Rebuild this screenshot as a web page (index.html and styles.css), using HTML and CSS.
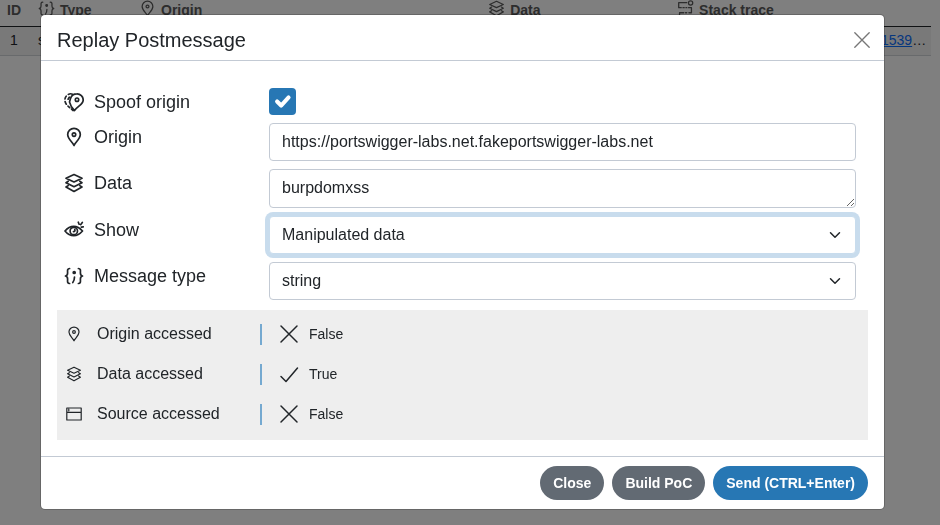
FILE: index.html
```html
<!DOCTYPE html>
<html lang="en">
<head>
<meta charset="utf-8">
<meta name="viewport" content="width=device-width, initial-scale=1">
<title>Replay Postmessage</title>
<link rel="stylesheet" href="styles.css">
</head>
<body>
<svg class="defs" aria-hidden="true">
  <symbol id="pin" viewBox="0 0 20 20"><path d="M10 18.500C8.900 15.400 3.700 12.200 3.700 7.600a6.300 6.300 0 0 1 12.600 0c0 4.600-5.200 7.800-6.300 10.900z"/><circle cx="10" cy="7.600" r="1.700"/></symbol>
  <symbol id="layers" viewBox="0 0 20 20"><path d="M10 1.500 18 5.300 10 9 2 5.300zM4.200 8.300 2 9.700l8 4 8-4-2.200-1.400M4.200 12.600 2 14l8 4.500 8-4.500-2.200-1.400"/></symbol>
  <symbol id="braces" viewBox="0 0 20 20"><path d="M5.600 2.500C3 2.500 3.600 5 3.600 7S3 9.700 1.500 10c1.500.3 2.100 1 2.100 3s-.6 4.500 2 4.500M14.400 2.500c2.600 0 2 2.500 2 4.500s.6 2.700 2.100 3c-1.500.3-2.100 1-2.100 3s.6 4.500-2 4.500M10.500 11c0 2.400-.5 4-1.700 5.500"/><circle cx="10.200" cy="6.500" r="1" fill="currentColor"/></symbol>
  <symbol id="spoof" viewBox="0 0 20 20"><path d="M10.500 18.500 7.300 14.500 5.500 10l1-3.500C7.400 3.500 10 1.800 12.900 1.800A6.100 6.100 0 0 1 19.200 8c0 4.500-5.700 6-8.700 10.500z"/><circle cx="13" cy="7.700" r="1.700"/><path d="M8.500 2.200C7 1.500 5.500 1.700 4.300 2.400M2.200 4.200C1.500 5 1.100 6 1 7M1.100 9.500c.2 1 .6 1.900 1.200 2.700M4 14.100l1.700 1.500M7.500 17l1.700 1.500M5.300 5.200 4.100 7.200"/></symbol>
  <symbol id="eye" viewBox="0 0 20 20"><path d="M1 11c2.500-3.100 5.200-4.700 8.800-4.700s6 1.600 8.700 4.700c-2.700 3.100-5.100 4.700-8.700 4.700S3.500 14.100 1 11z"/><circle cx="9.800" cy="11" r="3.700"/><path d="M10.800 9.500c.4 1.200 0 2-1.300 2.200M14.300 2.200l.8 2M18.300 2.500l-1.700 2.200M19.300 6.800l-2 .3"/></symbol>
  <symbol id="stack" viewBox="0 0 20 20"><path d="M11.500 3H2v6h3M7 9h1.500M10.500 9h1M13.500 9H17v6h-3M3 18v-3h5M10 15h1.500"/><circle cx="16" cy="3.500" r="2.500"/></symbol>
  <symbol id="window" viewBox="0 0 20 20"><path d="M1 2.500h18v15H1zM1 8h18M3.500 4v2"/></symbol>
  <symbol id="cross" viewBox="0 0 20 20"><path d="m2 2 16 16M18 2 2 18"/></symbol>
  <symbol id="tick" viewBox="0 0 20 20"><path d="m2 12.500 5 5L18.500 4"/></symbol>
</svg>

<main class="page">
  <table class="messages">
    <colgroup><col class="col-id"><col class="col-type"><col class="col-origin"><col class="col-data"><col><col class="col-link"></colgroup>
    <thead>
      <tr>
        <th>ID</th>
        <th><span class="heading"><svg class="icon"><use href="#braces"/></svg>Type</span></th>
        <th><span class="heading"><svg class="icon"><use href="#pin"/></svg>Origin</span></th>
        <th><span class="heading"><svg class="icon"><use href="#layers"/></svg>Data</span></th>
        <th><span class="heading"><svg class="icon"><use href="#stack"/></svg>Stack trace</span></th>
        <th></th>
      </tr>
    </thead>
    <tbody>
      <tr><td class="number">1</td><td>s</td><td></td><td></td><td></td><td><a href="#">1539</a>…</td></tr>
    </tbody>
  </table>
</main>

<div class="overlay">
  <form class="modal" role="dialog" aria-labelledby="title">
    <header class="modal-header">
      <h1 id="title">Replay Postmessage</h1>
      <button type="button" class="dismiss" aria-label="Close dialog"><svg class="icon"><use href="#cross"/></svg></button>
    </header>
    <div class="modal-body">
      <div class="fields">
        <label for="spoof-origin"><svg class="icon"><use href="#spoof"/></svg>Spoof origin</label>
        <span class="check"><input type="checkbox" id="spoof-origin" checked><svg viewBox="0 0 20 20"><path d="m6 10 3 3 5.500-6"/></svg></span>
        <label for="origin"><svg class="icon"><use href="#pin"/></svg>Origin</label>
        <input class="control" type="text" id="origin" value="https://portswigger-labs.net.fakeportswigger-labs.net">
        <label for="data"><svg class="icon"><use href="#layers"/></svg>Data</label>
        <textarea class="control" id="data" rows="1">burpdomxss</textarea>
        <label for="show"><svg class="icon"><use href="#eye"/></svg>Show</label>
        <span class="picker"><select class="control active" id="show"><option>Manipulated data</option></select><svg viewBox="0 0 16 16"><path d="m2 5 6 6 6-6"/></svg></span>
        <label for="type"><svg class="icon"><use href="#braces"/></svg>Message type</label>
        <span class="picker"><select class="control" id="type"><option>string</option></select><svg viewBox="0 0 16 16"><path d="m2 5 6 6 6-6"/></svg></span>
      </div>
      <dl class="access">
        <div><dt><svg class="icon"><use href="#pin"/></svg>Origin accessed</dt><dd><svg class="icon"><use href="#cross"/></svg>False</dd></div>
        <div><dt><svg class="icon"><use href="#layers"/></svg>Data accessed</dt><dd><svg class="icon"><use href="#tick"/></svg>True</dd></div>
        <div><dt><svg class="icon"><use href="#window"/></svg>Source accessed</dt><dd><svg class="icon"><use href="#cross"/></svg>False</dd></div>
      </dl>
    </div>
    <footer class="modal-footer">
      <button type="button" class="button">Close</button>
      <button type="button" class="button">Build PoC</button>
      <button type="submit" class="button primary">Send (CTRL+Enter)</button>
    </footer>
  </form>
</div>
</body>
</html>
```
FILE: styles.css
```css
* {
  box-sizing: border-box;
}

body {
  margin: 0;
  background: #fff;
  color: #212529;
  font: 16px/24px "Liberation Sans", Arial, sans-serif;
}

button, input, textarea, select {
  font: inherit;
  color: inherit;
}

.defs {
  display: none;
}

.icon {
  width: 20px;
  height: 20px;
  flex: none;
  fill: none;
  stroke: currentColor;
  stroke-width: 1.5;
  stroke-linecap: round;
  stroke-linejoin: round;
}

/* Message list */
.page {
  padding-right: 9px;
}

.messages {
  width: 100%;
  table-layout: fixed;
  border-collapse: collapse;
  font-size: 14px;
  line-height: 20px;
}

.messages th {
  height: 26px;
  padding: 0 7px 6px;
  border-bottom: 1px solid #212529;
  color: #5a5a5a;
  text-align: left;
  vertical-align: middle;
  white-space: nowrap;
}

.messages td {
  height: 29px;
  padding: 0 7px 2px;
  border-bottom: 1px solid #d0d4d8;
  background: #f2f2f2;
}

.messages td.number {
  padding-left: 10px;
}

.messages a {
  color: #0d6efd;
}

.heading {
  display: flex;
  align-items: center;
  gap: 5px;
}

.messages .icon {
  width: 17px;
  height: 17px;
  margin-bottom: 3px;
}

.col-id { width: 31px; }
.col-type { width: 101px; }
.col-origin { width: 37.5%; }
.col-data { width: 20.3%; }
.col-link { width: 57px; }

/* Dialog */
.overlay {
  position: fixed;
  inset: 0;
  overflow: auto;
  padding: 14px 55px 14px 40px;
  background: rgb(0 0 0 / 50%);
}

.modal {
  border: 1px solid rgb(0 0 0 / 20%);
  border-radius: 5px;
  background: #fff;
  background-clip: padding-box;
}

.modal-header {
  display: flex;
  align-items: center;
  justify-content: space-between;
  padding: 10px 12px 5px 16px;
  border-bottom: 1px solid #c3cad4;
}

.modal-header h1 {
  margin: 0;
  font-size: 20px;
  line-height: 30px;
  font-weight: 400;
}

.modal-header .dismiss {
  display: flex;
  padding: 0;
  border: 0;
  background: none;
  color: #777;
}

.dismiss .icon {
  padding: 1px;
}

.modal-body {
  padding: 27px 16px 16px;
}

.fields {
  display: grid;
  grid-template-columns: 205px 1fr;
  gap: 8px 0;
  align-items: start;
  padding: 0 12px 0 7px;
}

.fields label {
  display: flex;
  align-items: center;
  gap: 10px;
  padding-top: 1px;
  font-size: 18px;
  line-height: 26px;
}

.fields label .icon {
  stroke-width: 1.7;
}

.control {
  display: block;
  width: 100%;
  height: 38px;
  margin: 0;
  padding: 6px 12px;
  border: 1px solid #c3cad4;
  border-radius: 4px;
  background: #fff;
  outline: 0;
}

textarea.control {
  height: 39px;
  min-height: 39px;
  resize: vertical;
}

select.control {
  appearance: none;
}

.control.active {
  border-color: #c8dced;
  box-shadow: 0 0 0 4px #c8dced;
}

.picker, .check {
  display: grid;
}

.picker > *, .check > * {
  grid-area: 1 / 1;
}

.picker svg, .check svg {
  pointer-events: none;
  fill: none;
  stroke: currentColor;
  stroke-width: 2;
  stroke-linecap: round;
  stroke-linejoin: round;
}

.picker svg {
  width: 12px;
  height: 12px;
  place-self: center end;
  margin-right: 15px;
}

.check {
  width: 27px;
  height: 27px;
}

.check input {
  appearance: none;
  width: 100%;
  height: 100%;
  margin: 0;
  border-radius: 4px;
}

.check input:checked {
  background: #2777b4;
}

.check svg {
  color: #fff;
  stroke-width: 3;
}

.access {
  display: grid;
  gap: 16px;
  margin: 10px 0 0;
  padding: 12px 8px 14px;
  background: #eee;
}

.access div {
  display: grid;
  grid-template-columns: 195px 1fr;
  align-items: center;
}

.access dt, .access dd {
  display: flex;
  align-items: center;
  margin: 0;
}

.access dt {
  gap: 15px;
  padding-left: 1px;
}

.access dt .icon {
  width: 16px;
  height: 16px;
}

.access dd {
  gap: 10px;
  padding-left: 17px;
  border-left: 2px solid #75a9d0;
  font-size: 14px;
  line-height: 21px;
}

.modal-footer {
  display: flex;
  justify-content: flex-end;
  gap: 8px;
  padding: 9px 16px;
  border-top: 1px solid #c3cad4;
}

.button {
  padding: 7px 13px;
  border: 0;
  border-radius: 17px;
  background: #626a73;
  color: #fff;
  font-size: 14px;
  line-height: 20px;
  font-weight: 700;
}

.button.primary {
  background: #2777b4;
}
```
